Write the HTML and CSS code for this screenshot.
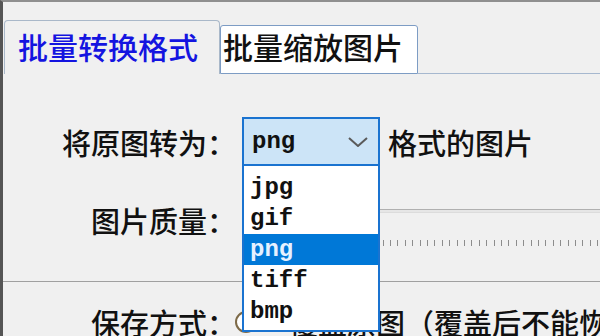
FILE: index.html
```html
<!DOCTYPE html>
<html lang="zh-CN">

<head>
  <meta charset="UTF-8">
  <meta name="viewport" content="width=device-width, initial-scale=1.0">
  <title>批量转换格式</title>

  <link rel="stylesheet" href="styles.css">
</head>

<body>
  <div class="window">
    <div class="tabs">
      <div class="tab tab-active">批量转换格式</div>
      <div class="tab">批量缩放图片</div>
      <div class="tab-fill"></div>
    </div>

    <div class="panel">
      <div class="row row-format">
        <span class="label">将原图转为：</span>
        <div class="combo">
          <div class="combo-box">
            <span>png</span>
            <svg class="chevron" width="20" height="10" viewBox="0 0 20 10">
              <path d="M1 1 L10 9 L19 1" fill="none" stroke="#5a5a5a" stroke-width="2" />
            </svg>
          </div>
          <ul class="combo-list">
            <li>jpg</li>
            <li>gif</li>
            <li class="selected">png</li>
            <li>tiff</li>
            <li>bmp</li>
          </ul>
        </div>
        <span class="after">格式的图片</span>
      </div>

      <div class="row row-quality">
        <span class="label">图片质量：</span>
        <div class="slider">
          <div class="track"></div>
          <div class="ticks"></div>
        </div>
      </div>
    </div>

    <div class="row row-save">
      <span class="label">保存方式：</span>
      <span class="radio"></span>
      <span class="choice">覆盖原图（覆盖后不能恢复）</span>
    </div>
  </div>
</body>

</html>
```

FILE: styles.css
```css
* {
  margin: 0;
  padding: 0;
  box-sizing: border-box;
}

body {
  background: #f0f0f0;
  color: #111;
  font-family: "Noto Sans CJK SC", sans-serif;
  font-weight: 500;
}

.window {
  width: 600px;
  height: 336px;
  overflow: hidden;
  background: #f0f0f0;
  border-top: 2px solid #8f8f8f;
  border-left: 3px solid #555;
}

/* tabs */
.tabs {
  display: flex;
  align-items: flex-end;
  height: 72px;
  padding-left: 1px;
}

.tab {
  width: 198px;
  height: 49px;
  padding: 2px 0 0 2px;
  font-size: 30px;
  line-height: 36px;
  white-space: nowrap;
  background: #fff;
  border: 1px solid #7d9cc4;
  border-radius: 3px 3px 0 0;
}

.tab-active {
  width: 216px;
  height: 54px;
  padding: 7px 0 0 13px;
  color: #1414e0;
  background: #f0f0f0;
  border-color: #a9b8c9;
  border-bottom: none;
  border-radius: 4px 4px 0 0;
}

.tab-fill {
  flex: 1;
  border-bottom: 1px solid #a6b8cf;
}

.panel {
  height: 208px;
  padding-top: 43px;
  border-bottom: 1px solid #a0a0a0;
}

/* rows */
.row {
  display: grid;
  grid-template-columns: 233px auto auto;
  align-items: center;
  justify-content: start;
  font-size: 29px;
  line-height: 40px;
  white-space: nowrap;
}

.label {
  text-align: right;
}

.combo {
  position: relative;
  width: 138px;
  margin: 0 8px 0 6px;
}

.combo-box {
  display: flex;
  align-items: center;
  justify-content: space-between;
  height: 49px;
  padding: 0 10px 0 8px;
  background: #cce4f7;
  border: 2px solid #1a73d0;
  font: bold 24px/31px "Liberation Mono", monospace;
}

.combo-list {
  position: absolute;
  top: 100%;
  left: 0;
  width: 100%;
  z-index: 2;
  list-style: none;
  padding: 6px 0 3px;
  background: #fff;
  border: 2px solid #1a73d0;
  border-top: none;
  font: bold 24px/31px "Liberation Mono", monospace;
}

.combo-list li {
  height: 31px;
  padding-left: 6px;
}

.combo-list .selected {
  background: #0078d7;
  color: #e6f1ff;
}

.row-quality {
  grid-template-columns: 233px 1fr;
  align-items: start;
  margin-top: 34px;
}

.slider {
  margin-left: 6px;
  padding-top: 9px;
}

.track {
  height: 4px;
  background: #e6e6e6;
  border-top: 1px solid #b0b0b0;
  border-bottom: 1px solid #dcdcdc;
}

.ticks {
  height: 6px;
  margin-top: 27px;
  background: repeating-linear-gradient(90deg, #8c8c8c 0 1px, transparent 1px 7.4px);
}

.row-save {
  margin-top: 20px;
}

.radio {
  width: 22px;
  height: 22px;
  margin-left: -1px;
  background: #fff;
  border: 2px solid #7d6a48;
  border-radius: 50%;
}

.choice {
  margin-left: 32px;
}
```
